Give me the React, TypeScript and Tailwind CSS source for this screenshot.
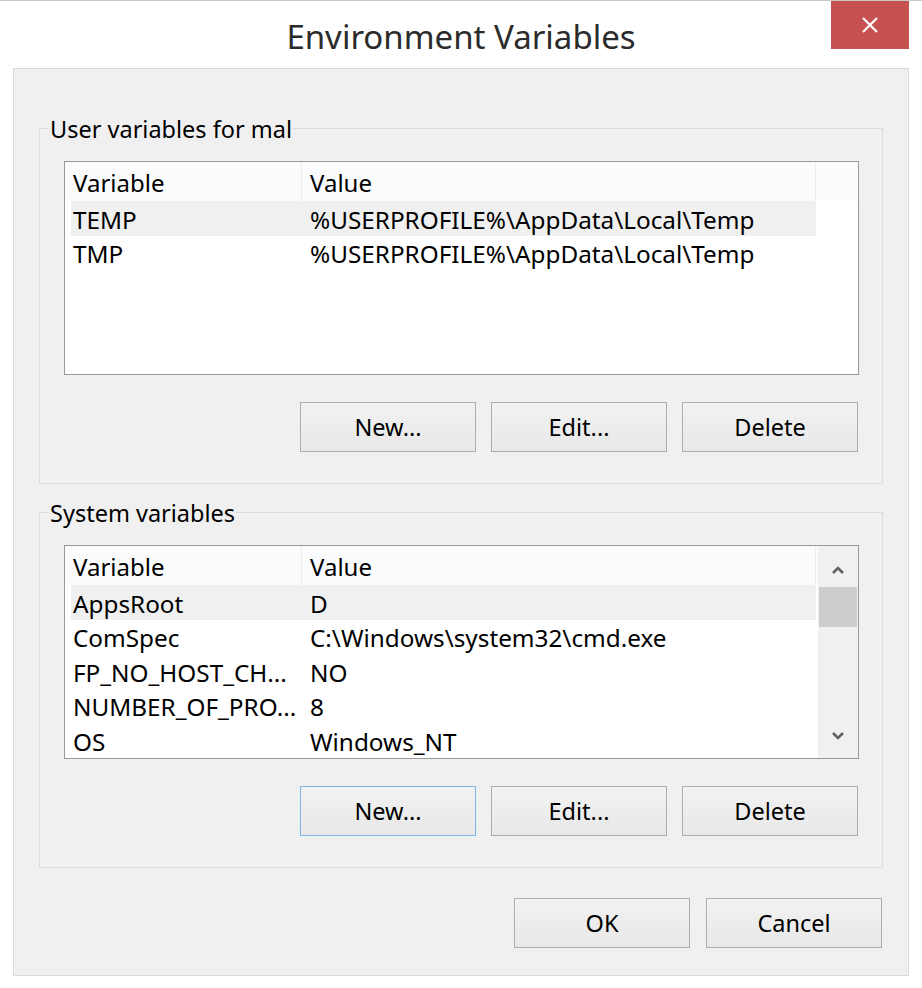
import React from "react";

type Row = { name: string; value: string; selected?: boolean };

const userRows: Row[] = [
  { name: "TEMP", value: "%USERPROFILE%\\AppData\\Local\\Temp", selected: true },
  { name: "TMP", value: "%USERPROFILE%\\AppData\\Local\\Temp" },
];

const sysRows: Row[] = [
  { name: "AppsRoot", value: "D", selected: true },
  { name: "ComSpec", value: "C:\\Windows\\system32\\cmd.exe" },
  { name: "FP_NO_HOST_CH...", value: "NO" },
  { name: "NUMBER_OF_PRO...", value: "8" },
  { name: "OS", value: "Windows_NT" },
];

function Btn({ label, focused }: { label: string; focused?: boolean }) {
  return (
    <div
      className={
        "w-[176px] h-[50px] flex items-center justify-center text-[23.5px] text-black border bg-gradient-to-b from-[#f2f2f2] to-[#e8e8e8] pt-[1px] " +
        (focused ? "border-[#7eb4ea]" : "border-[#adadad]")
      }
    >
      {label}
    </div>
  );
}

function ListView({ rows, scroll }: { rows: Row[]; scroll?: boolean }) {
  return (
    <div className="w-[795px] h-[214px] border border-[#9a9a9a] bg-white flex overflow-hidden">
      <div className="flex-1 flex flex-col">
        <div className="h-[39px] shrink-0 flex bg-[#fafbfc] text-[24px] text-black">
          <div className="w-[237px] pl-[8px] pt-[3px] flex items-center border-r border-[#ececec]">Variable</div>
          <div className="w-[514px] pl-[8px] pt-[3px] flex items-center border-r border-[#ececec]">Value</div>
          <div className="flex-1" />
        </div>
        {rows.map((r) => (
          <div key={r.name} className="h-[34.6px] shrink-0 flex pl-[6px] text-[24.3px] text-black">
            <div className={"flex w-[745px] " + (r.selected ? "bg-[#f0f0f0]" : "")}>
              <div className="w-[231px] pl-[2px] pt-[3px] flex items-center whitespace-nowrap">{r.name}</div>
              <div className="flex-1 pl-[8px] pt-[3px] flex items-center whitespace-nowrap">{r.value}</div>
            </div>
          </div>
        ))}
      </div>
      {scroll && (
        <div className="w-[40px] h-full bg-[#f0f0f0] flex flex-col">
          <div className="h-[41px] flex items-center justify-center pt-[6px]">
            <svg width="14" height="10" viewBox="0 0 14 10">
              <path d="M2 8 L7 3 L12 8" fill="none" stroke="#606060" strokeWidth="2.6" />
            </svg>
          </div>
          <div className="h-[40px] mx-[1px] bg-[#cdcdcd]" />
          <div className="flex-1" />
          <div className="h-[41px] flex items-center justify-center pb-[4px]">
            <svg width="14" height="10" viewBox="0 0 14 10">
              <path d="M2 2 L7 7 L12 2" fill="none" stroke="#606060" strokeWidth="2.6" />
            </svg>
          </div>
        </div>
      )}
    </div>
  );
}

function Group({ label, rows, scroll, focusNew }: { label: string; rows: Row[]; scroll?: boolean; focusNew?: boolean }) {
  return (
    <div className="relative border border-[#dcdcdc] h-[356px] pt-[32px] pl-[24px]">
      <span className="absolute left-[9px] -top-[17px] px-[1px] bg-[#f0f0f0] text-[23.5px] leading-[34px] text-black">
        {label}
      </span>
      <ListView rows={rows} scroll={scroll} />
      <div className="flex justify-end gap-[15px] w-[794px] mt-[27px]">
        <Btn label="New..." focused={focusNew} />
        <Btn label="Edit..." />
        <Btn label="Delete" />
      </div>
    </div>
  );
}

export default function App() {
  return (
    <div className="w-[922px] h-[988px] bg-white border-t border-[#c8c8c8] font-['Noto_Sans',sans-serif] flex flex-col">
      <div className="relative h-[67px] flex items-center justify-center">
        <span className="text-[33px] text-[#2b2b2b] leading-none pt-[3px]">Environment Variables</span>
        <div className="absolute top-0 right-[13px] w-[78px] h-[48px] bg-[#c75050] flex items-center justify-center">
          <svg width="18" height="16" viewBox="0 0 18 16">
            <path d="M2 1 L16 15 M16 1 L2 15" stroke="white" strokeWidth="2.2" />
          </svg>
        </div>
      </div>
      <div className="mx-[13px] w-[896px] h-[908px] border border-[#dadada] bg-[#f0f0f0] pt-[59px] px-[25px] flex flex-col">
        <Group label="User variables for mal" rows={userRows} />
        <div className="h-[28px]" />
        <Group label="System variables" rows={sysRows} scroll focusNew />
        <div className="flex justify-end gap-[16px] mt-[30px] pr-[1px]">
          <Btn label="OK" />
          <Btn label="Cancel" />
        </div>
      </div>
    </div>
  );
}
